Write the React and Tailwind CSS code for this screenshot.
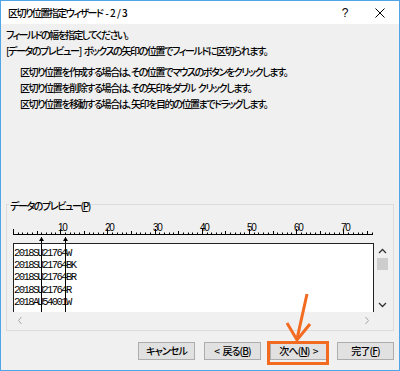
import React from "react";

const rows = ["2018SU21764W", "2018SU21764BK", "2018SU21764BR", "2018SU21764R", "2018AU54001W"];
const CW = 4.72;
const px = (i) => Math.round(i * CW) + 0.5;

function Ruler() {
  const ticks = [];
  for (let i = 0; i <= 76; i++) {
    const x = px(i);
    const h = i % 10 === 0 ? 5 : i % 5 === 0 ? 3 : 1.5;
    ticks.push(<line key={"t" + i} x1={x} x2={x} y1={16} y2={16 - h} stroke="#000" strokeWidth="1" />);
  }
  const nums = [];
  for (let n = 10; n <= 70; n += 10) {
    nums.push(
      <text key={"n" + n} x={px(n) - 2.5} y={13} fontSize="10" fontFamily="Liberation Sans, Arial, sans-serif" fill="#000">
        {n}
      </text>
    );
  }
  const markers = [6, 11].map(px);
  return (
    <svg width="361" height="25" className="block">
      <line x1="0" x2="360" y1="16.5" y2="16.5" stroke="#000" strokeWidth="1" />
      {ticks}
      {nums}
      {markers.map((x, i) => (
        <g key={"m" + i}>
          <polygon points={`${x - 2.5},23 ${x + 2.5},23 ${x},19`} fill="#000" />
          <line x1={x} x2={x} y1="19" y2="25" stroke="#000" strokeWidth="1" />
        </g>
      ))}
    </svg>
  );
}

function Btn({ children, className = "" }) {
  return (
    <div className={"w-[57px] h-[18px] border border-[#adadad] bg-[#e1e1e1] flex items-center justify-center text-[10px] tracking-[-0.9px] leading-none " + className}>
      {children}
    </div>
  );
}

export default function App() {
  const markers = [6, 11].map(px);
  return (
    <div className="relative w-[400px] h-[371px] border border-[#4ea6e6] bg-[#f0f0f0] flex flex-col overflow-hidden text-black font-['Noto_Sans_CJK_JP',sans-serif] font-medium text-[10px] tracking-[-1.4px] [word-spacing:2px] [font-feature-settings:'palt']">
      <div className="h-[23px] bg-white flex items-center shrink-0">
        <div className="pl-[7px] flex-1 text-[10px] tracking-[-1.5px] whitespace-pre">区切り位置指定ウィザード - 2 / 3</div>
        <div className="w-[14px] text-center text-[12px] tracking-normal font-['Liberation_Sans',sans-serif] mr-[22px]">?</div>
        <svg width="12" height="12" className="mr-[13px]" viewBox="0 0 12 12">
          <path d="M1.5 1.5 L10.5 10.5 M10.5 1.5 L1.5 10.5" stroke="#000" strokeWidth="1" />
        </svg>
      </div>

      <div className="pl-[5px] pt-[3px] leading-[16px]">
        <div className="tracking-[-1.6px]">フィールドの幅を指定してください。</div>
        <div>[データのプレビュー] ボックスの矢印の位置でフィールドに区切られます。</div>
      </div>
      <div className="pl-[19px] mt-[5px] leading-[16px]">
        <div>区切り位置を作成する場合は、その位置でマウスのボタンをクリックします。</div>
        <div>区切り位置を削除する場合は、その矢印をダブル クリックします。</div>
        <div>区切り位置を移動する場合は、矢印を目的の位置までドラッグします。</div>
      </div>

      <fieldset className="mx-[5px] mt-[84px] border border-[#dcdcdc] pb-[1px]">
        <legend className="ml-[2px] px-[1px] pt-[4px] leading-[12px]">
          データのプレビュー(<span className="underline">P</span>)
        </legend>
        <div className="ml-[6px] mt-[6px]">
          <Ruler />
        </div>
        <div className="ml-[6px] mr-[1px] flex">
          <div className="flex flex-col">
            <div className="relative w-[361px] h-[69px] bg-white border-l border-t border-r border-[#222] pt-[3px] overflow-hidden">
              {rows.map((r) => (
                <div key={r} className="font-['Liberation_Mono',monospace] font-normal text-[10.5px] leading-[12.2px] tracking-[-1.58px] [word-spacing:0px] whitespace-pre">
                  {r}
                </div>
              ))}
              <svg className="absolute left-[-1px] top-0" width="361" height="69">
                {markers.map((x, i) => (
                  <line key={i} x1={x} x2={x} y1="0" y2="69" stroke="#000" strokeWidth="1" />
                ))}
              </svg>
            </div>
            <div className="w-[361px] h-[17px] flex items-center justify-between px-[4px]">
              <svg width="6" height="9" viewBox="0 0 6 9"><path d="M4.5 1 L1.5 4.5 L4.5 8" fill="none" stroke="#a6a6a6" strokeWidth="1" /></svg>
              <svg width="6" height="9" viewBox="0 0 6 9"><path d="M1.5 1 L4.5 4.5 L1.5 8" fill="none" stroke="#a6a6a6" strokeWidth="1" /></svg>
            </div>
          </div>
          <div className="w-[17px] h-[69px] flex flex-col items-center">
            <svg width="9" height="6" viewBox="0 0 9 6" className="mt-[5px]"><path d="M1 5 L4.5 1.5 L8 5" fill="none" stroke="#333" strokeWidth="1.3" /></svg>
            <div className="w-[11px] h-[12px] bg-[#cdcdcd] mt-[4px]"></div>
            <div className="flex-1"></div>
            <svg width="9" height="6" viewBox="0 0 9 6" className="mb-[4px]"><path d="M1 1 L4.5 4.5 L8 1" fill="none" stroke="#333" strokeWidth="1.3" /></svg>
          </div>
        </div>
      </fieldset>

      <div className="flex justify-end gap-[9px] pr-[5px] mt-[11px]">
        <Btn>キャンセル</Btn>
        <Btn>&lt; 戻る(<span className="underline">B</span>)</Btn>
        <Btn>次へ(<span className="underline">N</span>) &gt;</Btn>
        <Btn className="ml-[1px]">完了(<span className="underline">F</span>)</Btn>
      </div>

      <div className="absolute left-[266px] top-[340px] w-[62px] h-[24px] border-[3px] border-[#f26b21]"></div>
      <svg className="absolute left-0 top-0 pointer-events-none" width="400" height="371">
        <path d="M306 293 L296 338" stroke="#f26b21" strokeWidth="3" fill="none" />
        <path d="M286 322 L296 339 L309 323" stroke="#f26b21" strokeWidth="3" fill="none" strokeLinejoin="miter" />
      </svg>
    </div>
  );
}
